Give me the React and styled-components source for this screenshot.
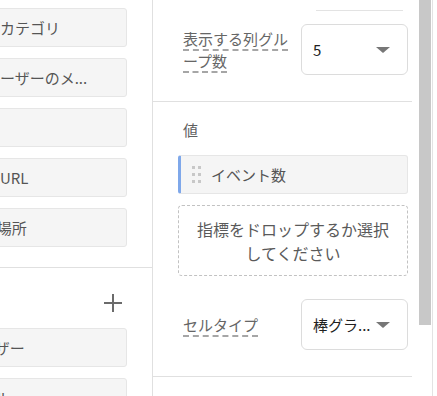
import styled, { createGlobalStyle } from "styled-components";

const GlobalStyle = createGlobalStyle`
  html, body {
    margin: 0;
    padding: 0;
    background: #ffffff;
  }
  body {
    font-family: "Noto Sans CJK JP", "Noto Sans", sans-serif;
    font-size: 15px;
  }
`;

const dimensions = [
  { text: "イベントカテゴリ", shift: -60 },
  { text: "ユーザーのメ...", shift: -15 },
  { text: "", shift: 0 },
  { text: "リンク先URL", shift: -60 },
  { text: "ページの場所", shift: -63 },
];

const columns = [
  { text: "ユーザー", shift: -35 },
  { text: "ページタイトル", shift: -95 },
];

export default function App() {
  return (
    <>
      <GlobalStyle />
      <Page>
        <LeftPanel>
          <ChipGroup>
            {dimensions.map((d, i) => (
              <Chip key={i}>
                <ChipText $shift={d.shift}>{d.text}</ChipText>
              </Chip>
            ))}
          </ChipGroup>
          <ChipGroup $withHeader>
            <GroupHeader>
              <PlusIcon width="18" height="18" viewBox="0 0 18 18">
                <path d="M9 0v18M0 9h18" stroke="#6b6b6b" strokeWidth="2" fill="none" />
              </PlusIcon>
            </GroupHeader>
            {columns.map((d, i) => (
              <Chip key={i}>
                <ChipText $shift={d.shift}>{d.text}</ChipText>
              </Chip>
            ))}
          </ChipGroup>
        </LeftPanel>

        <RightPanel>
          <TopUnderline />
          <Section $top={13} $bottom={26}>
            <SettingRow>
              <Label>
                <Dashed>表示する列グループ数</Dashed>
              </Label>
              <Select>
                <SelectValue>5</SelectValue>
                <Caret />
              </Select>
            </SettingRow>
          </Section>

          <Section $top={18} $bottom={26}>
            <SectionTitle>値</SectionTitle>
            <MetricChip>
              <Handle>
                {Array.from({ length: 6 }).map((_, i) => (
                  <Dot key={i} />
                ))}
              </Handle>
              <MetricName>イベント数</MetricName>
            </MetricChip>
            <DropZone>指標をドロップするか選択してください</DropZone>
            <SettingRow $spaced>
              <Label>
                <Dashed>セルタイプ</Dashed>
              </Label>
              <Select>
                <SelectValue>棒グラ...</SelectValue>
                <Caret />
              </Select>
            </SettingRow>
          </Section>
        </RightPanel>

        <ScrollTrack>
          <ScrollThumb />
        </ScrollTrack>
        <NextPanel />
      </Page>
    </>
  );
}

const Page = styled.div`
  display: flex;
  width: 437px;
  height: 396px;
  overflow: hidden;
  background: #ffffff;
`;

const LeftPanel = styled.div`
  width: 152px;
  flex-shrink: 0;
  border-right: 1px solid #e0e0e0;
  overflow: hidden;
`;

const ChipGroup = styled.div`
  display: flex;
  flex-direction: column;
  gap: 11px;
  padding: ${(p) => (p.$withHeader ? "26px 0 0" : "8px 0 20px")};
  border-bottom: ${(p) => (p.$withHeader ? "none" : "1px solid #e0e0e0")};
`;

const GroupHeader = styled.div`
  display: flex;
  justify-content: flex-end;
  padding-right: 30px;
  height: 18px;
  margin-bottom: 5px;
`;

const PlusIcon = styled.svg`
  display: block;
`;

const Chip = styled.div`
  display: flex;
  align-items: center;
  box-sizing: border-box;
  height: 39px;
  width: 187px;
  margin-left: -60px;
  background: #f5f5f5;
  border: 1px solid #e6e6e6;
  border-radius: 3px;
  overflow: hidden;
  white-space: nowrap;
  color: #555555;
  font-size: 15px;
`;

const ChipText = styled.span`
  margin-left: ${(p) => p.$shift + 59}px;
`;

const RightPanel = styled.div`
  width: 266px;
  flex-shrink: 0;
  display: flex;
  flex-direction: column;
`;

const TopUnderline = styled.div`
  height: 10px;
  width: 87px;
  margin-left: 163px;
  border-bottom: 1px solid #e3e3e3;
`;

const Section = styled.div`
  display: flex;
  flex-direction: column;
  padding: ${(p) => p.$top}px 4px ${(p) => p.$bottom}px 25px;
  margin-right: 7px;
  border-bottom: 1px solid #e0e0e0;
`;

const SettingRow = styled.div`
  display: flex;
  align-items: center;
  justify-content: space-between;
  padding-left: 5px;
  margin-top: ${(p) => (p.$spaced ? "23px" : "0")};
`;

const Label = styled.div`
  width: 110px;
  line-height: 22px;
  color: #666666;
  font-size: 15px;
`;

const Dashed = styled.span`
  text-decoration: underline dashed #a6a6a6;
  text-decoration-thickness: 2px;
  text-underline-offset: 5px;
`;

const Select = styled.div`
  box-sizing: border-box;
  width: 107px;
  height: 51px;
  display: flex;
  align-items: center;
  gap: 4px;
  padding: 0 17px 0 11px;
  border: 1px solid #dcdcdc;
  border-radius: 6px;
  background: #ffffff;
`;

const SelectValue = styled.span`
  flex: 1;
  color: #212121;
  font-size: 15px;
  white-space: nowrap;
  overflow: hidden;
`;

const Caret = styled.span`
  width: 0;
  height: 0;
  border-left: 7px solid transparent;
  border-right: 7px solid transparent;
  border-top: 6px solid #777777;
`;

const SectionTitle = styled.div`
  padding-left: 5px;
  line-height: 20px;
  color: #5f5f5f;
  font-size: 15px;
  margin-bottom: 15px;
`;

const MetricChip = styled.div`
  box-sizing: border-box;
  height: 39px;
  display: flex;
  align-items: center;
  gap: 10px;
  padding-left: 11px;
  background: #f5f5f5;
  border: 1px solid #e6e6e6;
  border-left: 3px solid #7fa8ea;
  border-radius: 3px;
  color: #555555;
  font-size: 15px;
`;

const Handle = styled.div`
  display: grid;
  grid-template-columns: repeat(2, 3px);
  grid-auto-rows: 3px;
  column-gap: 3px;
  row-gap: 4px;
`;

const Dot = styled.span`
  background: #c8c8c8;
`;

const MetricName = styled.span``;

const DropZone = styled.div`
  box-sizing: border-box;
  height: 71px;
  margin-top: 11px;
  padding: 0 14px;
  display: flex;
  align-items: center;
  justify-content: center;
  text-align: center;
  border: 1px dashed #c2c2c2;
  border-radius: 4px;
  color: #5a5a5a;
  font-size: 16px;
  line-height: 24px;
`;

const ScrollTrack = styled.div`
  width: 12px;
  flex-shrink: 0;
  background: #ffffff;
`;

const ScrollThumb = styled.div`
  height: 325px;
  background: #c8c8c8;
`;

const NextPanel = styled.div`
  flex: 1;
  border-left: 1px solid #e3e3e3;
  margin-left: 1px;
`;
